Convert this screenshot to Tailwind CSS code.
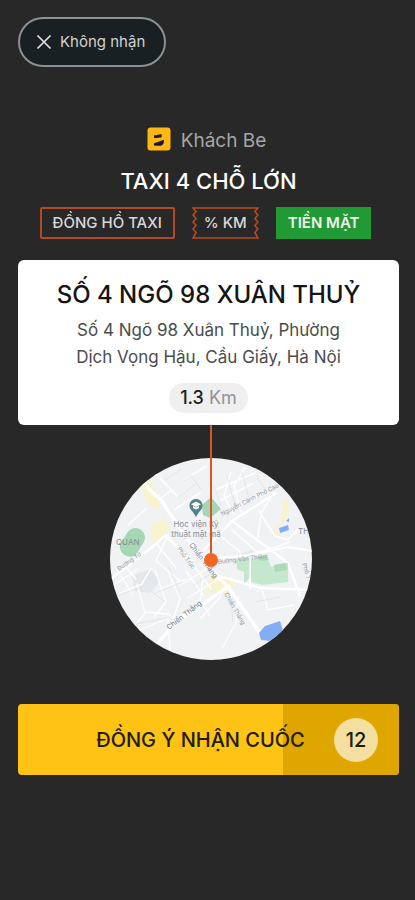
<!DOCTYPE html>
<html lang="vi">
<head>
<meta charset="utf-8">
<meta name="viewport" content="width=device-width, initial-scale=1">
<title>Nhận cuốc</title>
<script src="https://cdn.jsdelivr.net/npm/@tailwindcss/browser@4"></script>
</head>
<body class="bg-[#282828] font-['Inter','Liberation_Sans',sans-serif]">
<main class="flex min-h-screen flex-col pt-[17px] pr-4 pl-[18px]">
  <header>
    <button type="button" class="flex h-[50px] items-center gap-2 rounded-full border-2 border-[#8b9091] bg-[#182023] pr-[19px] pl-4 text-[15px] text-[#d2d2d2]">
      <svg class="size-4" viewBox="0 0 16 16" fill="none" stroke="#e0e0e0" stroke-width="1.7" aria-hidden="true"><path d="M1.500 1.500 14.500 14.500M14.500 1.500 1.500 14.500"/></svg>
      Không nhận
    </button>
  </header>

  <section class="flex flex-col items-center pt-[60px]">
    <div class="flex h-6 items-center gap-2.5 pr-1">
      <svg class="size-6" viewBox="0 0 24 24" aria-hidden="true">
        <rect x="0.5" y="0.5" width="23" height="23" rx="3" fill="#fdb813"/>
        <path d="M7 8.200c2.700.5 4.400-1.200 7.700-1l-.2 3.300c-2.900-.2-5 1.100-7.500.4zM7.200 16c3.200-.4 5.300-2 9.700-3.300.2 3.500-.8 6-4 6-2.200.1-4.900-.1-6.100-.5z" fill="#22123f"/>
      </svg>
      <p class="pt-1 text-[19px] leading-6 text-[#a6a6a6]">Khách Be</p>
    </div>
    <h1 class="mt-4 text-[22px] leading-7 font-medium text-white">TAXI 4 CHỖ LỚN</h1>
    <ul class="mt-3 flex h-8 items-stretch gap-[17px] pr-1.5 text-[15px] leading-8 font-medium text-[#d8d8d8]">
      <li class="flex items-center rounded-xs border-2 border-[#b54a22] px-[11px]">ĐỒNG HỒ TAXI</li>
      <li class="relative flex items-center px-3">
        <svg class="absolute inset-0 size-full" viewBox="0 0 66 32" preserveAspectRatio="none" fill="none" stroke="#b54a22" stroke-width="1.6" aria-hidden="true"><path d="M1 1H65L62 4.500 65 8 62 11.500 65 15 62 18.500 65 22 62 25.500 65 31H1L4 25.500 1 22 4 18.500 1 15 4 11.500 1 8 4 4.500Z"/></svg>
        <span class="relative">% KM</span>
      </li>
      <li class="flex items-center bg-[#219a35] px-3 font-semibold text-[#f0f4ee]">TIỀN MẶT</li>
    </ul>
  </section>

  <section class="mt-[21px] flex flex-col items-center rounded-md bg-white px-8 pt-[17px] pb-3">
    <h2 class="text-2xl leading-9 font-medium whitespace-nowrap text-[#151515]">SỐ 4 NGÕ 98 XUÂN THUỶ</h2>
    <p class="mt-1 text-center text-[17px] leading-[27px] text-[#4c4c4c]">Số 4 Ngõ 98 Xuân Thuỷ, Phường<br>Dịch Vọng Hậu, Cầu Giấy, Hà Nội</p>
    <p class="mt-3 rounded-full bg-[#efefef] px-[11px] text-lg leading-[30px] text-[#929292]"><span class="font-medium text-[#202020]">1.3</span> Km</p>
  </section>

  <figure class="relative ml-1 self-center pt-[33px]">
    <svg class="size-[202px] rounded-full" viewBox="0 0 202 202" role="img" aria-label="Bản đồ điểm đón" font-family="Inter, 'Liberation Sans', sans-serif">
      <rect width="202" height="202" fill="#f0f2f4"/>
      <g fill="#e5e8eb">
        <path d="M22 118l18-7 10 12-10 12-15-2zM132 95l10-3 5 9-12 3z"/>
      </g>
      <g fill="#f8f3cf">
        <path d="M29 27l11-5 11 20-3 10-10-5zM41 67l13-6 6 9-13 17-5-5zM173 43l5-4 1 18-6 8-7 7 6 4-8 4-2-7 8-8zM101 118l8-3 15 9-3 12-16-2-11 3z"/>
      </g>
      <g fill="none" stroke="#fff" stroke-linecap="round">
        <path stroke-width="3.500" d="M27 20 52 43 69 70 84 89 109 120 119 130 152 178M119 128 100 141 67 163 49 184"/>
        <path stroke-width="2.500" d="M2 120 40 91 56 77M56 78 80 102M94 101 134 98 178 89 202 93M109 118 150 130 202 132M142 97 140 130M94 92 122 63 166 35M122 63 178 105 190 138"/>
        <path stroke-width="1.500" d="M122 72 147 94 158 92 180 84M149 53 165 78 178 82 188 71M164 34 151 55 148 79M103 72 130 94M36 51 18 67M50 41 77 20 96 8M64 52 90 35M75 70 102 49M42 12 67 38M124 57 114 38 121 14M131 54 124 28 135 10M109 43 142 26M105 32 145 15M112 56 157 34"/>
        <path stroke-width="1.300" d="M10 135 32 126 41 110M27 126 35 155 22 171M35 154 59 156 65 164M32 171 61 159M45 112 56 144 44 159M59 115 70 141 63 162M50 131 76 121M76 113 93 137M84 108 101 131M69 128 98 110M78 140 110 120M6 110 23 137M13 105 26 121M4 127 28 111M58 77 46 103 70 123M47 86 66 110M58 162 60 191M128 139 126 165 112 190M152 132 158 152 184 147M93 120 90 142 100 158M111 138 91 160"/>
      </g>
      <g fill="none" stroke="#dde1e5" stroke-width="0.700">
        <path d="M55 22l17-11M62 31l19-13M69 39l18-14M81 17l10 15M117 18l9 33M132 14l8 30M104 28l7 20M146 17l11 17M8 138l25-10M36 129l19 15M58 108l12 26M43 136l29-12M26 166l36-7M121 142l2 22M83 128l17-12M145 144l26-5"/>
      </g>
      <g fill="#a6d7b4">
        <rect x="13" y="69" width="19" height="30" rx="9" transform="rotate(32 22 84)"/>
        <path d="M92 47l9-8 10 12-11 9-7-3zM11 173l7-5 3 4-7 5z"/>
      </g>
      <path fill="#c5e7ce" d="M126 101l13-1v21l-5 4v-11l-7-3zM141 101l16-2 4 10 17-4v19l-25 3-12-3z"/>
      <path fill="#a9dbb7" d="M147 99l9-1 3 4-9 1zM164 107l12-2 1 7-12 2z"/>
      <path fill="#83aef5" d="M149 175l6-7 15-5 4 13-13 7-10-1zM169 70l9-3 1 5-9 3zM176 63l3-3v4z"/>
      <g fill="#929aa0" font-size="6">
        <text x="112" y="58" transform="rotate(-27 112 58)">Nguyễn Cảnh Phó Cao</text>
        <text x="9" y="113" transform="rotate(-35 9 113)">Đường Tứ</text>
        <text x="67" y="91" transform="rotate(53 67 91)">Phố Trúc</text>
        <text x="108" y="106" transform="rotate(-7 108 106)">Đường Văn Thiêm</text>
        <text x="114" y="136" transform="rotate(60 114 136)">Chiến Thắng</text>
        <text x="192" y="106" transform="rotate(70 192 106)">Phố T</text>
      </g>
      <g fill="#72787d" font-size="7">
        <text x="59" y="172" transform="rotate(-38 59 172)">Chiến Thắng</text>
        <text x="79" y="87" transform="rotate(53 79 87)">Chiến Thắng</text>
      </g>
      <g fill="#858e95" font-size="8">
        <text x="6" y="87">QUAN</text>
        <text x="188" y="76">TH</text>
        <text x="86" y="69" text-anchor="middle">Học viện Kỹ</text>
        <text x="86" y="79" text-anchor="middle">thuật mật mã</text>
      </g>
      <path fill="#56808b" d="M86 41c4 0 6.500 3 6.500 6.500 0 5-4.500 6-6.500 12-2-6-6.500-7-6.500-12 0-3.500 2.500-6.500 6.500-6.500z"/>
      <path fill="#fff" d="M86 43.500l5 2.700-5 2.700-5-2.700zM83 48l3 1.600 3-1.600v2l-3 1.600-3-1.600z"/>
    </svg>
    <span class="absolute inset-x-0 top-0 flex h-[142px] flex-col items-center" aria-hidden="true">
      <span class="w-0.5 flex-1 bg-[#d85624]"></span>
      <span class="size-3.5 rounded-full bg-[#f26522]"></span>
    </span>
  </figure>

  <button type="button" class="relative mt-11 flex h-[71px] items-center justify-center overflow-hidden rounded bg-[#ffc315] text-xl font-medium text-[#211b0b]">
    <span class="absolute inset-y-0 right-0 bg-[#dfa600]" style="width:30.5%"></span>
    <span class="relative pr-4">ĐỒNG Ý NHẬN CUỐC</span>
    <span class="absolute right-[21px] flex size-11 items-center justify-center rounded-full bg-[#f4dfa0]">12</span>
  </button>
</main>
</body>
</html>
